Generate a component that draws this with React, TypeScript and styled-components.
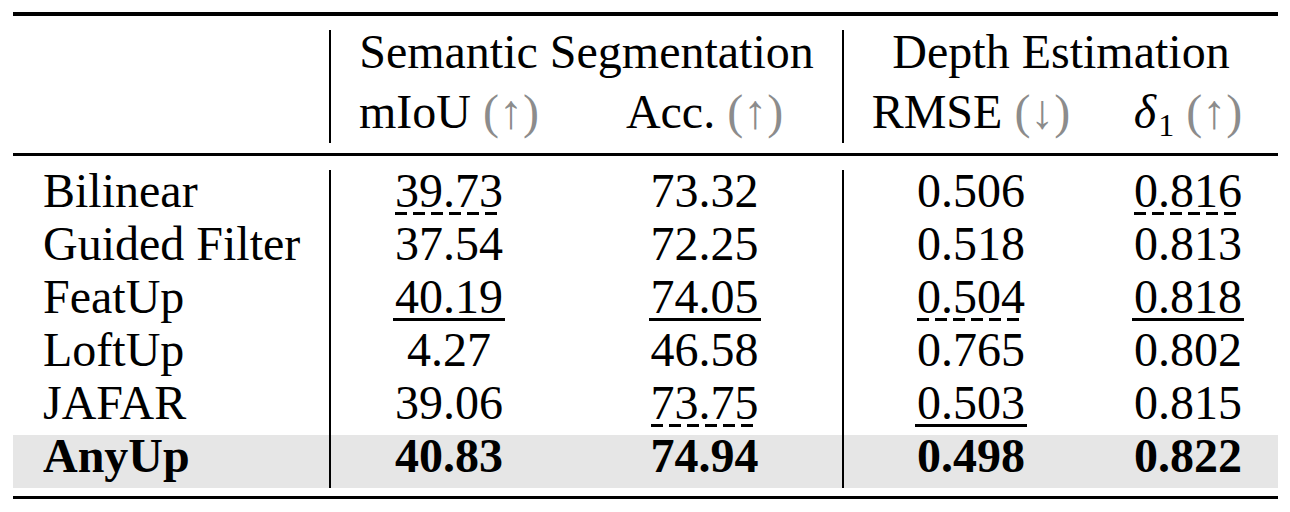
import React from 'react';
import styled, {createGlobalStyle} from 'styled-components';

const GlobalStyle = createGlobalStyle`
  body {
    margin: 0;
    background: #fff;
    color: #000;
  }
`;

const Wrapper = styled.div`
  width: 1265px;
  margin-left: 13px;
  padding-top: 12px;
  font-family: "Liberation Serif", "Times New Roman", serif;
`;

const Rule = styled.div<{ weight: number }>`
  height: ${p => p.weight}px;
  background: #000;
`;

const Section = styled.div<{ top: number; bottom: number }>`
  padding: ${p => p.top}px 0 ${p => p.bottom}px;
`;

const Row = styled.div<{ height: number; lh: number; shade?: boolean; bold?: boolean }>`
  display: grid;
  grid-template-columns: 316px 238px 275px 256px 180px;
  height: ${p => p.height}px;
  line-height: ${p => p.lh}px;
  font-size: 48px;
  font-weight: ${p => (p.bold ? 700 : 400)};
  background: ${p => (p.shade ? '#e6e6e6' : 'transparent')};
`;

const Cell = styled.div<{ divider?: boolean; span?: number; left?: boolean }>`
  grid-column: span ${p => p.span || 1};
  text-align: ${p => (p.left ? 'left' : 'center')};
  padding-left: ${p => (p.left ? '30px' : '0')};
  border-left: ${p => (p.divider ? '2px solid #000' : 'none')};
  white-space: nowrap;
`;

const Arrow = styled.span`
  color: #8c8c8c;
  margin-left: 12px;
`;

const Delta = styled.span`
  font-style: italic;
`;

const Sub = styled.span`
  font-size: 32px;
  margin-left: 2px;
  position: relative;
  top: 8px;
`;

const Mark = styled.span<{ dashed?: boolean }>`
  padding: 0 ${p => (p.dashed ? 0 : 2)}px;
  background-image: ${p =>
    p.dashed
      ? 'repeating-linear-gradient(to right, #000 0 12px, transparent 12px 18px)'
      : 'linear-gradient(#000, #000)'};
  background-size: 100% 3px;
  background-repeat: no-repeat;
  background-position: left 0 bottom 2px;
`;

type Val = { v: string; u?: 'solid' | 'dash' };

const rows: { name: string; vals: Val[]; best?: boolean }[] = [
  { name: 'Bilinear', vals: [{ v: '39.73', u: 'dash' }, { v: '73.32' }, { v: '0.506' }, { v: '0.816', u: 'dash' }] },
  { name: 'Guided Filter', vals: [{ v: '37.54' }, { v: '72.25' }, { v: '0.518' }, { v: '0.813' }] },
  { name: 'FeatUp', vals: [{ v: '40.19', u: 'solid' }, { v: '74.05', u: 'solid' }, { v: '0.504', u: 'dash' }, { v: '0.818', u: 'solid' }] },
  { name: 'LoftUp', vals: [{ v: '4.27' }, { v: '46.58' }, { v: '0.765' }, { v: '0.802' }] },
  { name: 'JAFAR', vals: [{ v: '39.06' }, { v: '73.75', u: 'dash' }, { v: '0.503', u: 'solid' }, { v: '0.815' }] },
  { name: 'AnyUp', vals: [{ v: '40.83' }, { v: '74.94' }, { v: '0.498' }, { v: '0.822' }], best: true },
];

function Value({ val }: { val: Val }) {
  if (!val.u) return <>{val.v}</>;
  return <Mark dashed={val.u === 'dash'}>{val.v}</Mark>;
}

export default function App() {
  return (
    <>
      <GlobalStyle/>
      <Wrapper>
        <Rule weight={4}/>
        <Section top={14} bottom={10}>
          <Row height={56} lh={44}>
            <Cell/>
            <Cell divider span={2}>Semantic Segmentation</Cell>
            <Cell divider span={2}>Depth Estimation</Cell>
          </Row>
          <Row height={57} lh={51}>
            <Cell/>
            <Cell divider>mIoU<Arrow>(↑)</Arrow></Cell>
            <Cell>Acc.<Arrow>(↑)</Arrow></Cell>
            <Cell divider>RMSE<Arrow>(↓)</Arrow></Cell>
            <Cell><Delta>δ</Delta><Sub>1</Sub><Arrow>(↑)</Arrow></Cell>
          </Row>
        </Section>
        <Rule weight={3}/>
        <Section top={14} bottom={8}>
          {rows.map(r => (
            <Row key={r.name} height={53} lh={41} shade={r.best} bold={r.best}>
              <Cell left>{r.name}</Cell>
              {r.vals.map((val, i) => (
                <Cell key={i} divider={i === 0 || i === 2}>
                  <Value val={val}/>
                </Cell>
              ))}
            </Row>
          ))}
        </Section>
        <Rule weight={3}/>
      </Wrapper>
    </>
  );
}
